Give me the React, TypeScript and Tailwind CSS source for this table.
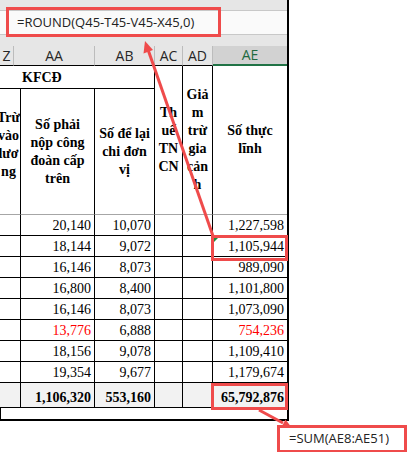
import React from "react";

const serif = "font-['Liberation_Serif','Times_New_Roman',serif]";
const ui = "font-['Open_Sans','Noto_Sans',sans-serif]";

type Row = { aa: string; ab: string; ae: string; red?: boolean };

const rows: Row[] = [
  { aa: "20,140", ab: "10,070", ae: "1,227,598" },
  { aa: "18,144", ab: "9,072", ae: "1,105,944" },
  { aa: "16,146", ab: "8,073", ae: "989,090" },
  { aa: "16,800", ab: "8,400", ae: "1,101,800" },
  { aa: "16,146", ab: "8,073", ae: "1,073,090" },
  { aa: "13,776", ab: "6,888", ae: "754,236", red: true },
  { aa: "18,156", ab: "9,078", ae: "1,109,410" },
  { aa: "19,354", ab: "9,677", ae: "1,179,674" },
];

// column letters on top of the sheet
const columns = [
  { label: "Z", w: "w-[14px]" },
  { label: "AA", w: "w-[81px]" },
  { label: "AB", w: "w-[60px]" },
  { label: "AC", w: "w-[28px]" },
  { label: "AD", w: "w-[30px]" },
];

function DataRow({ row, index }: { row: Row; index: number }) {
  const cell = "border-r border-b border-r-black border-b-black";
  const num = "flex items-end justify-end pr-[3px] pb-[1px] leading-[16px]";
  return (
    <>
      <div className={cell} />
      <div className={`${cell} ${num} ${row.red ? "text-[#ff0000]" : ""}`}>{row.aa}</div>
      <div className={`${cell} ${num}`}>{row.ab}</div>
      <div className={cell} />
      <div className={cell} />
      <div className={`relative border-b border-b-black ${num} ${row.red ? "text-[#ff0000]" : ""}`}>
        {index === 1 && (
          <span className="absolute left-[1px] top-[1px] w-0 h-0 border-t-[5px] border-r-[5px] border-t-[#1e8a3c] border-r-transparent" />
        )}
        {row.ae}
      </div>
    </>
  );
}

export default function App() {
  const red = "#ef4b4b";
  return (
    <div className="relative w-[408px] h-[452px] bg-white overflow-hidden text-black">
      {/* Sheet */}
      <div className="w-[289px] border-r-2 border-b-2 border-black">
        {/* Formula bar */}
        <div className="h-[46px] bg-[#e6e6e6] pt-[10px]">
          <div className={`h-[25px] bg-[#fafafa] border-y border-[#c8c8c8] flex items-center pl-[17px] text-[13px] text-[#222] ${ui}`}>
            =ROUND(Q45-T45-V45-X45,0)
          </div>
        </div>

        {/* Column letters */}
        <div className={`flex h-[20px] bg-[#e6e6e6] text-[14px] text-[#262626] ${ui}`}>
          {columns.map((c) => (
            <div
              key={c.label}
              className={`${c.w} shrink-0 flex items-center justify-center border-r border-r-[#bcbcbc] border-b border-b-black leading-none`}
            >
              {c.label}
            </div>
          ))}
          <div className="flex-1 flex items-center justify-center bg-[#d2d2d2] border-b-2 border-b-[#217346] text-[#1f6b40] leading-none">
            AE
          </div>
        </div>

        {/* Table */}
        <div
          className={`grid grid-cols-[21px_74px_60px_28px_30px_74px] grid-rows-[23px_126px_21px_21px_21px_21px_21px_21px_21px_21px_25px_11px] text-[14px] ${serif}`}
        >
          <div className="col-span-3 border-r border-b border-r-black border-b-black flex items-center pl-[22px] font-bold">
            KFCĐ
          </div>
          <div className="row-span-2 border-r border-b border-r-black border-b-[#a6a6a6] flex items-center justify-center text-center font-bold leading-[18px]">
            <div>
              Th<br />uế<br />TN<br />CN
            </div>
          </div>
          <div className="row-span-2 border-r border-b border-r-black border-b-[#a6a6a6] flex items-center justify-center text-center font-bold leading-[18px]">
            <div className="relative z-10">
              Giả<br />m<br />trừ<br />gia<br />cản<br />h
            </div>
          </div>
          <div className="row-span-2 border-b border-b-[#a6a6a6] flex items-center justify-center text-center font-bold leading-[18px]">
            <div>
              Số thực<br />lĩnh
            </div>
          </div>

          <div className="border-r border-b border-r-black border-b-[#a6a6a6] flex items-center overflow-hidden pb-[14px] font-bold leading-[18px]">
            <div className="w-[25px] shrink-0 -ml-[4px] text-center">
              Trừ<br />vào<br />lươ<br />ng
            </div>
          </div>
          <div className="border-r border-b border-r-black border-b-[#a6a6a6] flex items-center justify-center text-center font-bold leading-[18px]">
            <div>
              Số phải<br />nộp công<br />đoàn cấp<br />trên
            </div>
          </div>
          <div className="border-r border-b border-r-black border-b-[#a6a6a6] flex items-center justify-center text-center font-bold leading-[18px]">
            <div>
              Số để lại<br />chi đơn<br />vị
            </div>
          </div>

          {rows.map((r, i) => (
            <DataRow key={i} row={r} index={i} />
          ))}

          {/* Total row */}
          <div className="bg-[#f2f2f2] border-r border-b border-r-black border-b-black" />
          <div className="bg-[#f2f2f2] border-r border-b border-r-black border-b-black flex items-end justify-end pr-[3px] pb-[1px] leading-[16px] font-bold">
            1,106,320
          </div>
          <div className="bg-[#f2f2f2] border-r border-b border-r-black border-b-black flex items-end justify-end pr-[3px] pb-[1px] leading-[16px] font-bold">
            553,160
          </div>
          <div className="bg-[#f2f2f2] border-r border-b border-r-black border-b-black" />
          <div className="bg-[#f2f2f2] border-r border-b border-r-black border-b-black" />
          <div className="bg-[#f2f2f2] border-b border-b-black flex items-end justify-end pr-[3px] pb-[1px] leading-[16px] font-bold">
            65,792,876
          </div>

          <div className="col-span-6 border-l border-l-black" />
        </div>
      </div>

      {/* Annotations */}
      <div className="absolute left-[6px] top-[7px] w-[215px] h-[30px] border-[3px] border-[#ef4b4b]" />
      <div className="absolute left-[211px] top-[235px] w-[77px] h-[26px] border-[3px] border-[#ef4b4b]" />
      <div className="absolute left-[211px] top-[383px] w-[77px] h-[27px] border-[3px] border-[#ef4b4b]" />
      <div
        className={`absolute left-[277px] top-[425px] w-[130px] h-[28px] border-[3px] border-[#ef4b4b] bg-white flex items-center pl-[9px] text-[13px] text-[#222] ${ui}`}
      >
        =SUM(AE8:AE51)
      </div>

      <svg className="absolute inset-0 pointer-events-none z-20" width="408" height="452">
        <line x1="213" y1="236" x2="148.5" y2="51" stroke={red} strokeWidth="3" />
        <polygon points="145,41 153,50 143.5,53.5" fill={red} />
        <line x1="259" y1="410" x2="283" y2="423" stroke={red} strokeWidth="3" />
        <polygon points="292,428 281,428 285.5,419.5" fill={red} />
      </svg>
    </div>
  );
}
